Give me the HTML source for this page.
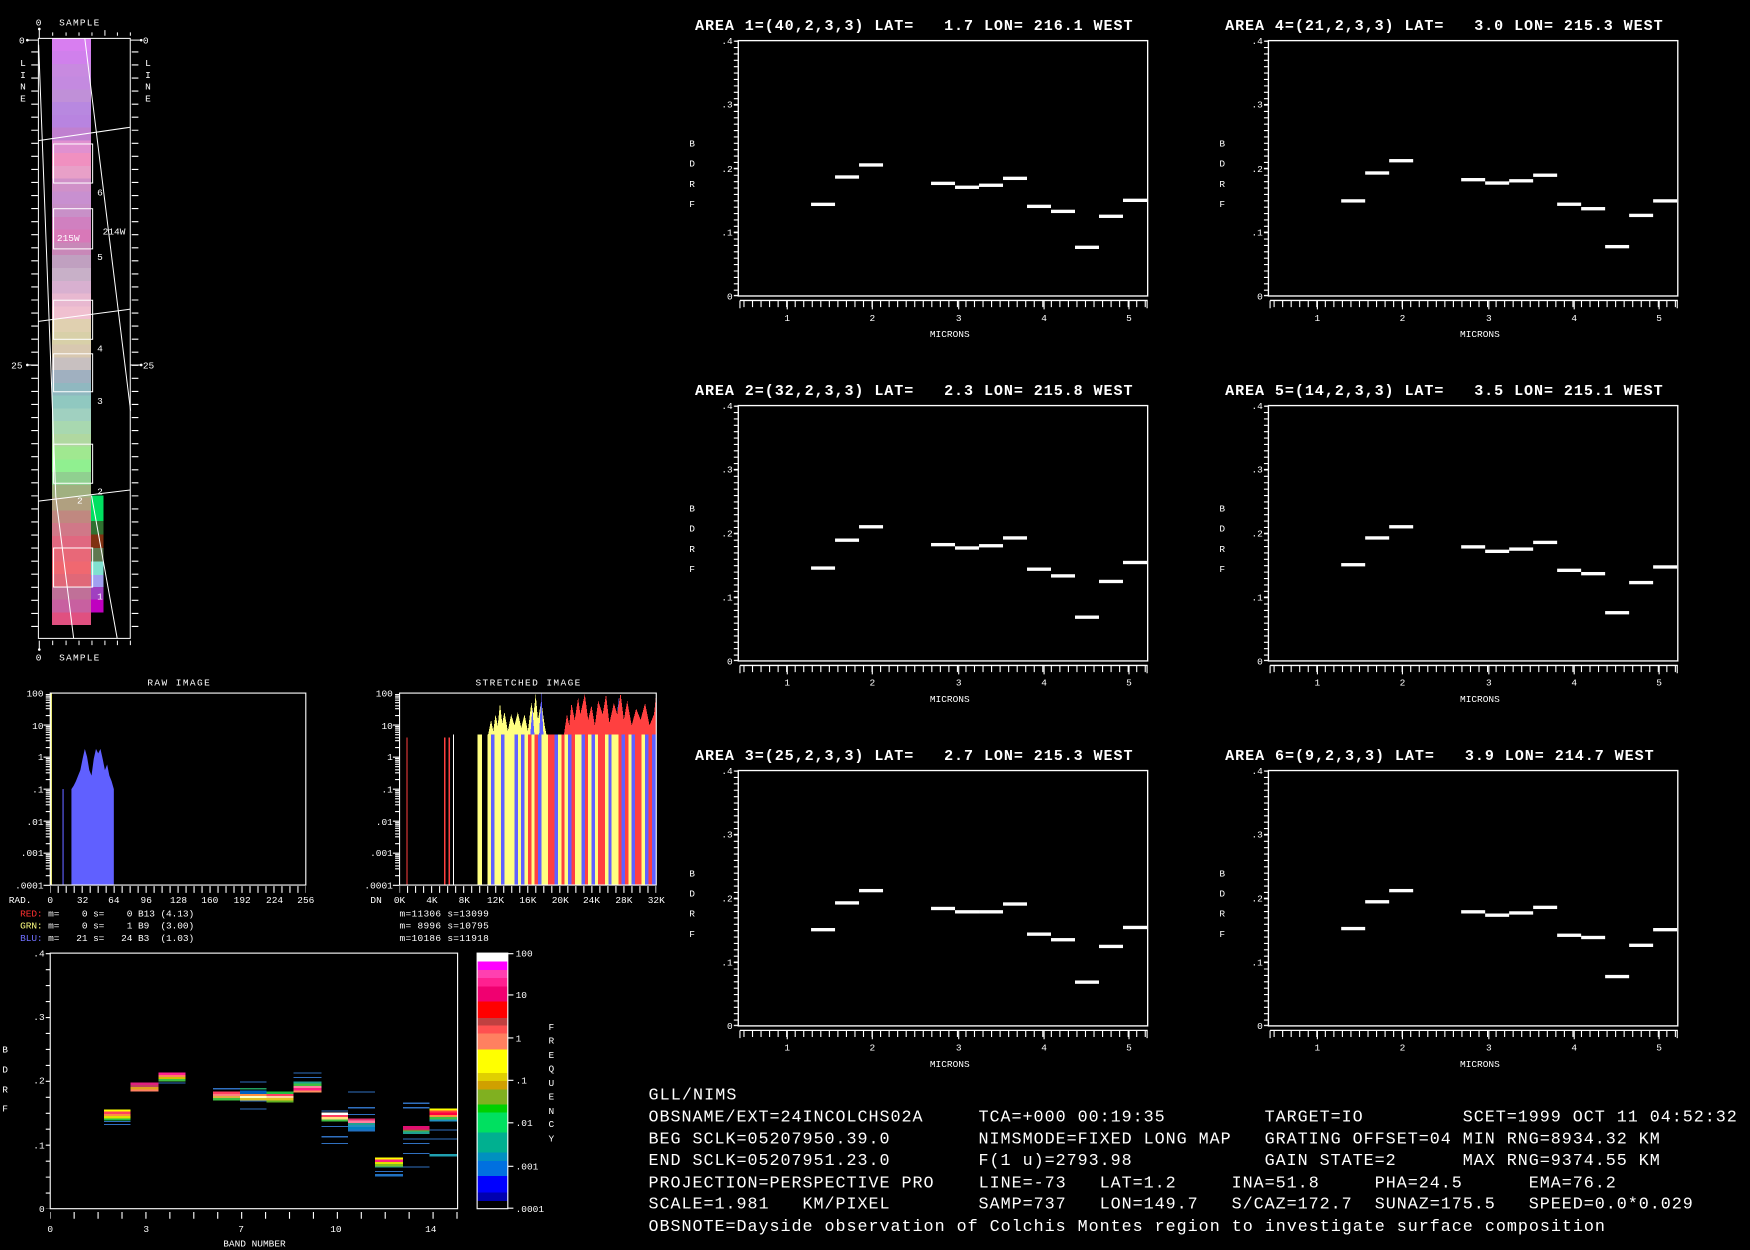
<!DOCTYPE html>
<html><head><meta charset="utf-8"><style>
html,body{margin:0;padding:0;background:#000;overflow:hidden}
svg{display:block}
text{font-family:"Liberation Mono",monospace;fill:#fff;white-space:pre}
.s{font-size:8.5px}
.t{font-size:13.5px;font-weight:bold}
.b{font-size:15px}
</style></head><body>
<svg width="1750" height="1250" viewBox="0 0 1568 1120" xmlns="http://www.w3.org/2000/svg">
<defs>
<path id="dec" d="M-4,1.3h4M-4,2.8h4M-4,4.4h4M-4,6.4h4M-4,8.6h4M-4,11.4h4M-4,14h4M-4,20.1h4M-6,28.7h6" stroke="#fff" stroke-width="1" fill="none"/>
<g id="pf" stroke="#fff" fill="none">
<rect x="0" y="0" width="366.8" height="228.8" stroke-width="1.2"/>
<line x1="-2" y1="0" x2="-2" y2="229" stroke-width="4" stroke-dasharray="1 4.72"/>
<line x1="-3" y1="0.5" x2="0" y2="0.5"/><line x1="-4" y1="57.2" x2="0" y2="57.2"/><line x1="-4" y1="114.4" x2="0" y2="114.4"/><line x1="-4" y1="171.6" x2="0" y2="171.6"/><line x1="-4" y1="228.3" x2="0" y2="228.3"/>
<line x1="1.5" y1="232.8" x2="366.8" y2="232.8" stroke-width="1.2"/>
<line x1="0" y1="235.8" x2="367" y2="235.8" stroke-width="6" stroke-dasharray="1 6.65" stroke-dashoffset="-4.6"/>
<path d="M1.5,232.8v7M43.9,232.8v8M120.1,232.8v8M197.5,232.8v8M274,232.8v8M350.1,232.8v8M366.3,232.8v7"/>
</g>
</defs>

<!-- ============ STRIP ============ -->
<g id="strip">
<g shape-rendering="crispEdges">
<rect x="46.4" y="34.4" width="35.2" height="11.5" fill="#d87ef0"/>
<rect x="46.4" y="45.8" width="35.2" height="11.5" fill="#d080ec"/>
<rect x="46.4" y="57.3" width="35.2" height="11.5" fill="#c88ae0"/>
<rect x="46.4" y="68.7" width="35.2" height="11.5" fill="#c48ae0"/>
<rect x="46.4" y="80.1" width="35.2" height="11.5" fill="#c090d8"/>
<rect x="46.4" y="91.6" width="35.2" height="11.5" fill="#b888e0"/>
<rect x="46.4" y="103" width="35.2" height="11.5" fill="#b884e0"/>
<rect x="46.4" y="114.4" width="35.2" height="11.5" fill="#c080d0"/>
<rect x="46.4" y="125.8" width="35.2" height="11.5" fill="#e090d0"/>
<rect x="46.4" y="137.3" width="35.2" height="11.5" fill="#f090c0"/>
<rect x="46.4" y="148.7" width="35.2" height="11.5" fill="#e8a0c8"/>
<rect x="46.4" y="160.1" width="35.2" height="11.5" fill="#d090c8"/>
<rect x="46.4" y="171.6" width="35.2" height="11.5" fill="#c890d0"/>
<rect x="46.4" y="183" width="35.2" height="11.5" fill="#c890c8"/>
<rect x="46.4" y="194.4" width="35.2" height="11.5" fill="#d080c0"/>
<rect x="46.4" y="205.8" width="35.2" height="11.5" fill="#d878b8"/>
<rect x="46.4" y="217.3" width="35.2" height="11.5" fill="#c888b8"/>
<rect x="46.4" y="228.7" width="35.2" height="11.5" fill="#c0a0c0"/>
<rect x="46.4" y="240.1" width="35.2" height="11.5" fill="#c8b0c8"/>
<rect x="46.4" y="251.6" width="35.2" height="11.5" fill="#d8b0d0"/>
<rect x="46.4" y="263" width="35.2" height="11.5" fill="#e8b8d0"/>
<rect x="46.4" y="274.4" width="35.2" height="11.5" fill="#f0c0d0"/>
<rect x="46.4" y="285.8" width="35.2" height="11.5" fill="#e0d0b0"/>
<rect x="46.4" y="297.3" width="35.2" height="11.5" fill="#d8d0a8"/>
<rect x="46.4" y="308.7" width="35.2" height="11.5" fill="#d8c8b0"/>
<rect x="46.4" y="320.1" width="35.2" height="11.5" fill="#c8c0c0"/>
<rect x="46.4" y="331.6" width="35.2" height="11.5" fill="#a0b0c0"/>
<rect x="46.4" y="343" width="35.2" height="11.5" fill="#90b8c0"/>
<rect x="46.4" y="354.4" width="35.2" height="11.5" fill="#90c8c0"/>
<rect x="46.4" y="365.8" width="35.2" height="11.5" fill="#a0d0c0"/>
<rect x="46.4" y="377.3" width="35.2" height="11.5" fill="#a8d8b0"/>
<rect x="46.4" y="388.7" width="35.2" height="11.5" fill="#b0d8a0"/>
<rect x="46.4" y="400.1" width="35.2" height="11.5" fill="#a0e890"/>
<rect x="46.4" y="411.6" width="35.2" height="11.5" fill="#90f090"/>
<rect x="46.4" y="423" width="35.2" height="11.5" fill="#90d090"/>
<rect x="46.4" y="434.4" width="35.2" height="11.5" fill="#a0b080"/>
<rect x="46.4" y="445.8" width="35.2" height="11.5" fill="#b0a080"/>
<rect x="46.4" y="457.3" width="35.2" height="11.5" fill="#c08880"/>
<rect x="46.4" y="468.7" width="35.2" height="11.5" fill="#d07888"/>
<rect x="46.4" y="480.1" width="35.2" height="11.5" fill="#e06880"/>
<rect x="46.4" y="491.6" width="35.2" height="11.5" fill="#e86878"/>
<rect x="46.4" y="503" width="35.2" height="11.5" fill="#f06870"/>
<rect x="46.4" y="514.4" width="35.2" height="11.5" fill="#e06878"/>
<rect x="46.4" y="525.8" width="35.2" height="11.5" fill="#c07098"/>
<rect x="46.4" y="537.3" width="35.2" height="11.5" fill="#c860a0"/>
<rect x="46.4" y="548.7" width="35.2" height="11.5" fill="#e05080"/>
<rect x="81.6" y="444" width="11.2" height="23" fill="#00e060"/>
<rect x="81.6" y="467" width="11.2" height="12" fill="#307030"/>
<rect x="81.6" y="479" width="11.2" height="12" fill="#803010"/>
<rect x="81.6" y="491" width="11.2" height="12" fill="#607850"/>
<rect x="81.6" y="503" width="11.2" height="12" fill="#80e0d0"/>
<rect x="81.6" y="515" width="11.2" height="11" fill="#a0a0f0"/>
<rect x="81.6" y="526" width="11.2" height="11" fill="#a040c0"/>
<rect x="81.6" y="537" width="11.2" height="12" fill="#c000c0"/>
</g>
<g stroke="#fff" fill="none" stroke-width="0.9">
<rect x="34.4" y="34.4" width="82.3" height="537.6"/>
<rect x="48" y="129" width="35" height="35"/>
<rect x="48" y="187" width="35" height="36"/>
<rect x="48" y="269" width="35" height="35"/>
<rect x="48" y="317" width="35" height="34"/>
<rect x="48" y="398" width="35" height="35"/>
<rect x="48" y="491" width="35" height="35"/>
<polyline points="34.6,40 50,445 66,572"/>
<polyline points="76,34.5 117,368"/>
<polyline points="82,444 105,572"/>
<line x1="34.4" y1="126" x2="116.7" y2="114"/>
<line x1="34.4" y1="288" x2="116.7" y2="277"/>
<line x1="34.4" y1="449" x2="116.7" y2="439"/>
<line x1="31" y1="46" x2="31" y2="572" stroke-width="6" stroke-dasharray="1 10.7"/>
<line x1="121" y1="46" x2="121" y2="572" stroke-width="6" stroke-dasharray="1 10.7"/>
<path d="M47.2,29v3M59.2,29v3M70.8,29v3M82.4,29v3M94,27v5M105.2,29v3M116.8,29v3M47.2,574v4M59.2,574v4M70.8,574v4M82.4,574v4M94,574v4M105.2,574v4M116.8,574v4M35.2,26v8M35.2,574v8M24,36h10M117,36h10M24,327h10M117,327h10"/>
</g>
<g fill="#fff"><circle cx="35.2" cy="26" r="1.2"/><circle cx="35.2" cy="582" r="1.2"/><circle cx="24.5" cy="36" r="1.2"/><circle cx="126.5" cy="36" r="1.2"/><circle cx="24.5" cy="327" r="1.2"/><circle cx="126.5" cy="327" r="1.2"/></g>
<text class="s" x="32" y="23">0</text><text class="s" x="53" y="23" textLength="36">SAMPLE</text>
<text class="s" x="32" y="592">0</text><text class="s" x="53" y="592" textLength="36">SAMPLE</text>
<text class="s" x="17" y="39">0</text><text class="s" x="128" y="39">0</text>
<text class="s" x="10" y="330">25</text><text class="s" x="128" y="330">25</text>
<text class="s" x="18" y="59">L</text><text class="s" x="18" y="70">I</text><text class="s" x="18" y="80">N</text><text class="s" x="18" y="91">E</text>
<text class="s" x="130" y="59">L</text><text class="s" x="130" y="70">I</text><text class="s" x="130" y="80">N</text><text class="s" x="130" y="91">E</text>
<text class="s" x="87" y="175">6</text><text class="s" x="87" y="233">5</text><text class="s" x="87" y="315">4</text><text class="s" x="87" y="362">3</text><text class="s" x="87" y="443">2</text><text class="s" x="69" y="451">2</text><text class="s" x="87" y="537">1</text>
<text class="s" x="51" y="216">215W</text><text class="s" x="92" y="210">214W</text>
</g>

<!-- ============ RAW HISTOGRAM ============ -->
<text class="s" x="132" y="614" textLength="56">RAW IMAGE</text>
<polygon fill="#6060ff" points="64,793 64,707 66,704 68,700 70,695 72,690 74,680 76,671 78,678 80,690 82,695 84,680 86,671 88,675 90,671 92,680 94,690 96,685 98,695 100,700 102,707 102,793"/>
<rect x="56" y="707" width="1" height="86" fill="#6060ff"/>
<rect x="45" y="621" width="1.5" height="172" fill="#ffff80"/>
<rect x="45" y="621" width="229" height="172" fill="none" stroke="#fff" stroke-width="1"/>
<use href="#dec" x="45" y="621"/><use href="#dec" x="45" y="649.7"/><use href="#dec" x="45" y="678.4"/><use href="#dec" x="45" y="707.1"/><use href="#dec" x="45" y="735.8"/><use href="#dec" x="45" y="764.5"/>
<line x1="45" y1="797" x2="274" y2="797" stroke="#fff" stroke-width="6" stroke-dasharray="1 6.16" stroke-dashoffset="0.5"/>
<g class="s" text-anchor="end"><text x="39" y="624">100</text><text x="39" y="653">10</text><text x="39" y="681">1</text><text x="39" y="710">.1</text><text x="39" y="739">.01</text><text x="39" y="767">.001</text><text x="39" y="796">.0001</text></g>
<g class="s" text-anchor="middle"><text x="18" y="809">RAD.</text><text x="45" y="809">0</text><text x="74" y="809">32</text><text x="102" y="809">64</text><text x="131" y="809">96</text><text x="160" y="809">128</text><text x="188" y="809">160</text><text x="217" y="809">192</text><text x="246" y="809">224</text><text x="274" y="809">256</text></g>
<text class="s" x="18" y="821" textLength="156"><tspan fill="#ff3030">RED:</tspan> m=    0 s=    0 B13 (4.13)</text>
<text class="s" x="18" y="832" textLength="156"><tspan fill="#ffff80">GRN:</tspan> m=    0 s=    1 B9  (3.00)</text>
<text class="s" x="18" y="843" textLength="156"><tspan fill="#7070ff">BLU:</tspan> m=   21 s=   24 B3  (1.03)</text>

<!-- ============ STRETCHED ============ -->
<text class="s" x="426" y="614" textLength="94">STRETCHED IMAGE</text>
<g shape-rendering="crispEdges">
<rect x="364" y="661" width="1" height="132" fill="#ff4040"/>
<rect x="398" y="661" width="1" height="132" fill="#ff4040"/>
<rect x="402" y="661" width="1" height="132" fill="#ff4040"/>
<rect x="406" y="658" width="1" height="135" fill="#ffffff"/>
<rect x="428" y="658" width="4" height="135" fill="#ffff80"/>
<polygon fill="#ffff80" points="437,660 440,645 442,655 444,640 446,650 448,630 450,648 452,638 455,655 458,640 461,650 464,638 467,652 470,640 473,655 476,630 478,640 480,622 482,645 485,628 488,650 490,660"/>
<polygon fill="#6060ff" points="475,660 477,635 479,660 483,660 485,621 487,660 540,660 542,630 544,660 552,660 554,625 556,660"/>
<polygon fill="#ff4040" points="505,660 508,640 510,650 512,630 515,645 518,625 520,640 524,622 527,645 530,632 533,650 536,628 540,640 543,622 546,648 550,630 553,640 556,621 559,645 562,628 566,650 570,635 574,645 578,630 582,650 586,640 588,621 588,660"/>
<rect x="437" y="658" width="3" height="135" fill="#ffff80"/><rect x="440" y="658" width="3" height="135" fill="#6060ff"/><rect x="443" y="658" width="3" height="135" fill="#ffff80"/><rect x="446" y="658" width="3" height="135" fill="#ffff80"/><rect x="449" y="658" width="3" height="135" fill="#6060ff"/><rect x="452" y="658" width="3" height="135" fill="#ffff80"/><rect x="455" y="658" width="3" height="135" fill="#ffff80"/><rect x="458" y="658" width="3" height="135" fill="#ffff80"/><rect x="461" y="658" width="3" height="135" fill="#6060ff"/><rect x="464" y="658" width="3" height="135" fill="#ffff80"/>
<rect x="467" y="658" width="3" height="135" fill="#6060ff"/><rect x="470" y="658" width="3" height="135" fill="#ffff80"/><rect x="473" y="658" width="3" height="135" fill="#ff4040"/><rect x="476" y="658" width="3" height="135" fill="#ffff80"/><rect x="479" y="658" width="3" height="135" fill="#ff4040"/><rect x="482" y="658" width="3" height="135" fill="#6060ff"/><rect x="485" y="658" width="3" height="135" fill="#ffff80"/><rect x="488" y="658" width="3" height="135" fill="#ffff80"/><rect x="491" y="658" width="3" height="135" fill="#ff4040"/><rect x="494" y="658" width="3" height="135" fill="#ff4040"/>
<rect x="497" y="658" width="3" height="135" fill="#6060ff"/><rect x="500" y="658" width="3" height="135" fill="#ffff80"/><rect x="503" y="658" width="3" height="135" fill="#ff4040"/><rect x="506" y="658" width="3" height="135" fill="#ffff80"/><rect x="509" y="658" width="3" height="135" fill="#6060ff"/><rect x="512" y="658" width="3" height="135" fill="#ff4040"/><rect x="515" y="658" width="3" height="135" fill="#ffff80"/><rect x="518" y="658" width="3" height="135" fill="#ffff80"/><rect x="521" y="658" width="3" height="135" fill="#6060ff"/><rect x="524" y="658" width="3" height="135" fill="#ff4040"/>
<rect x="527" y="658" width="3" height="135" fill="#ffff80"/><rect x="530" y="658" width="3" height="135" fill="#6060ff"/><rect x="533" y="658" width="3" height="135" fill="#ffff80"/><rect x="536" y="658" width="3" height="135" fill="#ff4040"/><rect x="539" y="658" width="3" height="135" fill="#ff4040"/><rect x="542" y="658" width="3" height="135" fill="#ffff80"/><rect x="545" y="658" width="3" height="135" fill="#6060ff"/><rect x="548" y="658" width="3" height="135" fill="#ffff80"/><rect x="551" y="658" width="3" height="135" fill="#ffff80"/><rect x="554" y="658" width="3" height="135" fill="#ff4040"/>
<rect x="557" y="658" width="3" height="135" fill="#6060ff"/><rect x="560" y="658" width="3" height="135" fill="#ff4040"/><rect x="563" y="658" width="3" height="135" fill="#ffff80"/><rect x="566" y="658" width="3" height="135" fill="#6060ff"/><rect x="569" y="658" width="3" height="135" fill="#ff4040"/><rect x="572" y="658" width="3" height="135" fill="#ff4040"/><rect x="575" y="658" width="3" height="135" fill="#ffff80"/><rect x="578" y="658" width="3" height="135" fill="#6060ff"/><rect x="581" y="658" width="3" height="135" fill="#ff4040"/><rect x="584" y="658" width="4" height="135" fill="#6060ff"/>
</g>
<rect x="358" y="621" width="230" height="172" fill="none" stroke="#fff" stroke-width="1"/>
<use href="#dec" x="358" y="621"/><use href="#dec" x="358" y="649.7"/><use href="#dec" x="358" y="678.4"/><use href="#dec" x="358" y="707.1"/><use href="#dec" x="358" y="735.8"/><use href="#dec" x="358" y="764.5"/>
<line x1="358" y1="797" x2="588" y2="797" stroke="#fff" stroke-width="6" stroke-dasharray="1 6.18" stroke-dashoffset="0.5"/>
<g class="s" text-anchor="end"><text x="352" y="624">100</text><text x="352" y="653">10</text><text x="352" y="681">1</text><text x="352" y="710">.1</text><text x="352" y="739">.01</text><text x="352" y="767">.001</text><text x="352" y="796">.0001</text></g>
<g class="s" text-anchor="middle"><text x="337" y="809">DN</text><text x="358" y="809">0K</text><text x="387" y="809">4K</text><text x="416" y="809">8K</text><text x="444" y="809">12K</text><text x="473" y="809">16K</text><text x="502" y="809">20K</text><text x="530" y="809">24K</text><text x="559" y="809">28K</text><text x="588" y="809">32K</text></g>
<text class="s" x="358" y="821" textLength="80">m=11306 s=13099</text>
<text class="s" x="358" y="832" textLength="80">m= 8996 s=10795</text>
<text class="s" x="358" y="843" textLength="80">m=10186 s=11918</text>

<!-- ============ BDRF BAND PLOT ============ -->
<g shape-rendering="crispEdges">
<rect x="93" y="994" width="24" height="2" fill="#ffff00"/><rect x="93" y="996" width="24" height="2" fill="#ff4060"/><rect x="93" y="998" width="24" height="2" fill="#ff9040"/><rect x="93" y="1000" width="24" height="2" fill="#e0e000"/><rect x="93" y="1002" width="24" height="2" fill="#20c040"/><rect x="93" y="1004.5" width="24" height="1" fill="#3070c0"/><rect x="93" y="1007" width="24" height="1" fill="#3070c0"/>
<rect x="117" y="970" width="25" height="2" fill="#e02080"/><rect x="117" y="972" width="25" height="2" fill="#c04060"/><rect x="117" y="974" width="25" height="2" fill="#e0a020"/><rect x="117" y="976" width="25" height="2" fill="#ff8060"/>
<rect x="142" y="961" width="24" height="2" fill="#ff2090"/><rect x="142" y="963" width="24" height="2" fill="#ff8060"/><rect x="142" y="965" width="24" height="2" fill="#d0c000"/><rect x="142" y="967" width="24" height="2" fill="#40c040"/><rect x="142" y="970" width="24" height="1" fill="#3070c0"/>
<rect x="191" y="975" width="24" height="1" fill="#3070c0"/><rect x="191" y="978" width="24" height="2" fill="#ff4060"/><rect x="191" y="980" width="24" height="2" fill="#ff8080"/><rect x="191" y="982" width="24" height="2" fill="#e0b040"/><rect x="191" y="984" width="24" height="2" fill="#40c040"/>
<rect x="215" y="969" width="24" height="1" fill="#3070c0"/><rect x="215" y="975" width="24" height="1" fill="#20a060"/><rect x="215" y="977" width="24" height="3" fill="#0060c0"/><rect x="215" y="980" width="24" height="2" fill="#ff9040"/><rect x="215" y="982" width="24" height="2" fill="#ffffc0"/><rect x="215" y="984" width="24" height="2" fill="#e0c020"/><rect x="215" y="986" width="24" height="1" fill="#3070c0"/><rect x="215" y="993" width="24" height="1" fill="#3070c0"/>
<rect x="239" y="978" width="24" height="2" fill="#20c040"/><rect x="239" y="980" width="24" height="2" fill="#ff4060"/><rect x="239" y="982" width="24" height="2" fill="#ffd0a0"/><rect x="239" y="984" width="24" height="2" fill="#e0c020"/><rect x="239" y="986" width="24" height="2" fill="#60b020"/>
<rect x="263" y="961" width="25" height="1" fill="#3070c0"/><rect x="263" y="965" width="25" height="1" fill="#3070c0"/><rect x="263" y="969" width="25" height="2" fill="#20a090"/><rect x="263" y="971" width="25" height="2" fill="#40c040"/><rect x="263" y="973" width="25" height="2" fill="#ff80a0"/><rect x="263" y="975" width="25" height="2" fill="#ff2080"/><rect x="263" y="977" width="25" height="2" fill="#ff9060"/>
<rect x="288" y="995" width="24" height="1" fill="#3070c0"/><rect x="288" y="997" width="24" height="2" fill="#ffffff"/><rect x="288" y="999" width="24" height="2" fill="#ff4060"/><rect x="288" y="1001" width="24" height="2" fill="#ffe080"/><rect x="288" y="1003" width="24" height="2" fill="#40c040"/><rect x="288" y="1009" width="24" height="1" fill="#3070c0"/><rect x="288" y="1018" width="24" height="1" fill="#3070c0"/><rect x="288" y="1024" width="24" height="1" fill="#3070c0"/>
<rect x="312" y="978" width="24" height="1" fill="#3070c0"/><rect x="312" y="992" width="24" height="1" fill="#3070c0"/><rect x="312" y="998" width="24" height="1" fill="#3070c0"/><rect x="312" y="1002" width="24" height="2" fill="#e03070"/><rect x="312" y="1004" width="24" height="2" fill="#ff80a0"/><rect x="312" y="1006" width="24" height="2" fill="#20a090"/><rect x="312" y="1008" width="24" height="2" fill="#2090c0"/><rect x="312" y="1010" width="24" height="2" fill="#0080c0"/><rect x="312" y="1012" width="24" height="2" fill="#2070c0"/>
<rect x="336" y="1037" width="25" height="2" fill="#ffff00"/><rect x="336" y="1039" width="25" height="2" fill="#ff2080"/><rect x="336" y="1041" width="25" height="2" fill="#e0e000"/><rect x="336" y="1043" width="25" height="2" fill="#80c020"/><rect x="336" y="1045" width="25" height="1" fill="#20a090"/><rect x="336" y="1049" width="25" height="1" fill="#3070c0"/><rect x="336" y="1052" width="25" height="2" fill="#2070c0"/>
<rect x="361" y="988" width="24" height="1" fill="#3070c0"/><rect x="361" y="992" width="24" height="1" fill="#3070c0"/><rect x="361" y="1009" width="24" height="3" fill="#e01070"/><rect x="361" y="1012" width="24" height="1" fill="#c04040"/><rect x="361" y="1013" width="24" height="1" fill="#40c040"/><rect x="361" y="1014" width="24" height="2" fill="#20a090"/><rect x="361" y="1020" width="24" height="1" fill="#3070c0"/><rect x="361" y="1024" width="24" height="1" fill="#3070c0"/><rect x="361" y="1033" width="24" height="1" fill="#3070c0"/><rect x="361" y="1045" width="24" height="1" fill="#3070c0"/>
<rect x="385" y="993" width="25" height="2" fill="#ffff00"/><rect x="385" y="995" width="25" height="2" fill="#ff4040"/><rect x="385" y="997" width="25" height="2" fill="#ff0040"/><rect x="385" y="999" width="25" height="2" fill="#ff9040"/><rect x="385" y="1001" width="25" height="2" fill="#40c040"/><rect x="385" y="1003" width="25" height="2" fill="#2090c0"/><rect x="385" y="1012" width="25" height="1" fill="#3070c0"/><rect x="385" y="1020" width="25" height="1" fill="#3070c0"/><rect x="385" y="1034" width="25" height="2" fill="#20a0b0"/>
</g>
<rect x="45" y="854" width="365" height="229" fill="none" stroke="#fff" stroke-width="1"/>
<line x1="43" y1="854" x2="43" y2="1083" stroke="#fff" stroke-width="4" stroke-dasharray="1 13.3"/>
<line x1="45" y1="1089" x2="411" y2="1089" stroke="#fff" stroke-width="6" stroke-dasharray="1 20.44" stroke-dashoffset="0.5"/>
<g class="s" text-anchor="end"><text x="40" y="857">.4</text><text x="40" y="914">.3</text><text x="40" y="971">.2</text><text x="40" y="1029">.1</text><text x="40" y="1086">0</text></g>
<g class="s"><text x="2" y="943">B</text><text x="2" y="961">D</text><text x="2" y="979">R</text><text x="2" y="996">F</text></g>
<g class="s" text-anchor="middle"><text x="45" y="1104">0</text><text x="131" y="1104">3</text><text x="216" y="1104">7</text><text x="301" y="1104">10</text><text x="386" y="1104">14</text><text x="228" y="1117">BAND NUMBER</text></g>
<g shape-rendering="crispEdges">
<rect x="427.5" y="854" width="27.5" height="7.5" fill="#ffffff"/>
<rect x="427.5" y="861.5" width="27.5" height="7.5" fill="#ff00ff"/>
<rect x="427.5" y="869" width="27.5" height="7.4" fill="#ff40b0"/>
<rect x="427.5" y="876.4" width="27.5" height="7.4" fill="#ff2090"/>
<rect x="427.5" y="883.8" width="27.5" height="13.4" fill="#f00070"/>
<rect x="427.5" y="897.2" width="27.5" height="14.9" fill="#ff0000"/>
<rect x="427.5" y="912.1" width="27.5" height="6.9" fill="#c04040"/>
<rect x="427.5" y="919" width="27.5" height="7.1" fill="#ff5050"/>
<rect x="427.5" y="926.1" width="27.5" height="14.3" fill="#ff8060"/>
<rect x="427.5" y="940.4" width="27.5" height="20.9" fill="#ffff00"/>
<rect x="427.5" y="961.3" width="27.5" height="7.4" fill="#e0d000"/>
<rect x="427.5" y="968.7" width="27.5" height="7.5" fill="#d0a000"/>
<rect x="427.5" y="976.2" width="27.5" height="13.4" fill="#80b020"/>
<rect x="427.5" y="989.6" width="27.5" height="7.4" fill="#00d000"/>
<rect x="427.5" y="997" width="27.5" height="17.9" fill="#00e060"/>
<rect x="427.5" y="1014.9" width="27.5" height="17.9" fill="#00b090"/>
<rect x="427.5" y="1032.8" width="27.5" height="7.5" fill="#0090c0"/>
<rect x="427.5" y="1040.3" width="27.5" height="13.4" fill="#0070e0"/>
<rect x="427.5" y="1053.7" width="27.5" height="14.9" fill="#0000ff"/>
<rect x="427.5" y="1068.6" width="27.5" height="7.4" fill="#0000b0"/>
</g>
<rect x="427.5" y="854" width="27.5" height="229" fill="none" stroke="#fff" stroke-width="1"/>
<path d="M455,854.5h5M455,891.5h5M455,930h5M455,968h5M455,1006h5M455,1045h5M455,1082.5h5" stroke="#fff"/>
<g class="s"><text x="462" y="857">100</text><text x="462" y="894">10</text><text x="462" y="933">1</text><text x="462" y="971">.1</text><text x="462" y="1009">.01</text><text x="462" y="1048">.001</text><text x="462" y="1086">.0001</text></g>
<g class="s" text-anchor="middle"><text x="494" y="923">F</text><text x="494" y="935">R</text><text x="494" y="948">E</text><text x="494" y="960">Q</text><text x="494" y="973">U</text><text x="494" y="985">E</text><text x="494" y="998">N</text><text x="494" y="1010">C</text><text x="494" y="1023">Y</text></g>

<!-- ============ AREA PLOTS ============ -->
<g transform="translate(661.5,36.4)">
<use href="#pf"/>
<text class="t" x="-38.8" y="-9.5" textLength="392">AREA 1=(40,2,3,3) LAT=   1.7 LON= 216.1 WEST</text>
<g class="s" text-anchor="end"><text x="-5" y="3">.4</text><text x="-5" y="60">.3</text><text x="-5" y="117.5">.2</text><text x="-5" y="174.6">.1</text><text x="-5" y="231.8">0</text></g>
<g class="s"><text x="-44" y="95">B</text><text x="-44" y="113">D</text><text x="-44" y="131">R</text><text x="-44" y="149">F</text></g>
<g class="s" text-anchor="middle"><text x="43.9" y="251">1</text><text x="120.1" y="251">2</text><text x="197.5" y="251">3</text><text x="274" y="251">4</text><text x="350.1" y="251">5</text><text x="189.5" y="265.5">MICRONS</text></g>
<g fill="#fff"><rect x="65.2" y="145.2" width="21.5" height="3"/><rect x="86.7" y="120.7" width="21.5" height="3"/><rect x="108.2" y="109.9" width="21.5" height="3"/><rect x="172.7" y="126.4" width="21.5" height="3"/><rect x="194.2" y="129.9" width="21.5" height="3"/><rect x="215.7" y="128.1" width="21.5" height="3"/><rect x="237.2" y="121.9" width="21.5" height="3"/><rect x="258.7" y="147" width="21.5" height="3"/><rect x="280.2" y="151.5" width="21.5" height="3"/><rect x="301.7" y="183.7" width="21.5" height="3"/><rect x="323.2" y="155.9" width="21.5" height="3"/><rect x="344.7" y="141.6" width="21.5" height="3"/></g>
</g>

<g transform="translate(1136.5,36.4)">
<use href="#pf"/>
<text class="t" x="-38.8" y="-9.5" textLength="392">AREA 4=(21,2,3,3) LAT=   3.0 LON= 215.3 WEST</text>
<g class="s" text-anchor="end"><text x="-5" y="3">.4</text><text x="-5" y="60">.3</text><text x="-5" y="117.5">.2</text><text x="-5" y="174.6">.1</text><text x="-5" y="231.8">0</text></g>
<g class="s"><text x="-44" y="95">B</text><text x="-44" y="113">D</text><text x="-44" y="131">R</text><text x="-44" y="149">F</text></g>
<g class="s" text-anchor="middle"><text x="43.9" y="251">1</text><text x="120.1" y="251">2</text><text x="197.5" y="251">3</text><text x="274" y="251">4</text><text x="350.1" y="251">5</text><text x="189.5" y="265.5">MICRONS</text></g>
<g fill="#fff"><rect x="65.2" y="142.1" width="21.5" height="3"/><rect x="86.7" y="117.1" width="21.5" height="3"/><rect x="108.2" y="106.1" width="21.5" height="3"/><rect x="172.7" y="123.1" width="21.5" height="3"/><rect x="194.2" y="126.1" width="21.5" height="3"/><rect x="215.7" y="124.1" width="21.5" height="3"/><rect x="237.2" y="119.1" width="21.5" height="3"/><rect x="258.7" y="145.1" width="21.5" height="3"/><rect x="280.2" y="149.1" width="21.5" height="3"/><rect x="301.7" y="183.1" width="21.5" height="3"/><rect x="323.2" y="155.1" width="21.5" height="3"/><rect x="344.7" y="142.1" width="21.5" height="3"/></g>
</g>

<g transform="translate(661.5,363.4)">
<use href="#pf"/>
<text class="t" x="-38.8" y="-9.5" textLength="392">AREA 2=(32,2,3,3) LAT=   2.3 LON= 215.8 WEST</text>
<g class="s" text-anchor="end"><text x="-5" y="3">.4</text><text x="-5" y="60">.3</text><text x="-5" y="117.5">.2</text><text x="-5" y="174.6">.1</text><text x="-5" y="231.8">0</text></g>
<g class="s"><text x="-44" y="95">B</text><text x="-44" y="113">D</text><text x="-44" y="131">R</text><text x="-44" y="149">F</text></g>
<g class="s" text-anchor="middle"><text x="43.9" y="251">1</text><text x="120.1" y="251">2</text><text x="197.5" y="251">3</text><text x="274" y="251">4</text><text x="350.1" y="251">5</text><text x="189.5" y="265.5">MICRONS</text></g>
<g fill="#fff"><rect x="65.2" y="144.1" width="21.5" height="3"/><rect x="86.7" y="119.1" width="21.5" height="3"/><rect x="108.2" y="107.1" width="21.5" height="3"/><rect x="172.7" y="123.1" width="21.5" height="3"/><rect x="194.2" y="126.1" width="21.5" height="3"/><rect x="215.7" y="124.1" width="21.5" height="3"/><rect x="237.2" y="117.1" width="21.5" height="3"/><rect x="258.7" y="145.1" width="21.5" height="3"/><rect x="280.2" y="151.1" width="21.5" height="3"/><rect x="301.7" y="188.1" width="21.5" height="3"/><rect x="323.2" y="156.1" width="21.5" height="3"/><rect x="344.7" y="139.1" width="21.5" height="3"/></g>
</g>

<g transform="translate(1136.5,363.4)">
<use href="#pf"/>
<text class="t" x="-38.8" y="-9.5" textLength="392">AREA 5=(14,2,3,3) LAT=   3.5 LON= 215.1 WEST</text>
<g class="s" text-anchor="end"><text x="-5" y="3">.4</text><text x="-5" y="60">.3</text><text x="-5" y="117.5">.2</text><text x="-5" y="174.6">.1</text><text x="-5" y="231.8">0</text></g>
<g class="s"><text x="-44" y="95">B</text><text x="-44" y="113">D</text><text x="-44" y="131">R</text><text x="-44" y="149">F</text></g>
<g class="s" text-anchor="middle"><text x="43.9" y="251">1</text><text x="120.1" y="251">2</text><text x="197.5" y="251">3</text><text x="274" y="251">4</text><text x="350.1" y="251">5</text><text x="189.5" y="265.5">MICRONS</text></g>
<g fill="#fff"><rect x="65.2" y="141.1" width="21.5" height="3"/><rect x="86.7" y="117.1" width="21.5" height="3"/><rect x="108.2" y="107.1" width="21.5" height="3"/><rect x="172.7" y="125.1" width="21.5" height="3"/><rect x="194.2" y="129.1" width="21.5" height="3"/><rect x="215.7" y="127.1" width="21.5" height="3"/><rect x="237.2" y="121.1" width="21.5" height="3"/><rect x="258.7" y="146.1" width="21.5" height="3"/><rect x="280.2" y="149.1" width="21.5" height="3"/><rect x="301.7" y="184.1" width="21.5" height="3"/><rect x="323.2" y="157.1" width="21.5" height="3"/><rect x="344.7" y="143.1" width="21.5" height="3"/></g>
</g>

<g transform="translate(661.5,690.4)">
<use href="#pf"/>
<text class="t" x="-38.8" y="-9.5" textLength="392">AREA 3=(25,2,3,3) LAT=   2.7 LON= 215.3 WEST</text>
<g class="s" text-anchor="end"><text x="-5" y="3">.4</text><text x="-5" y="60">.3</text><text x="-5" y="117.5">.2</text><text x="-5" y="174.6">.1</text><text x="-5" y="231.8">0</text></g>
<g class="s"><text x="-44" y="95">B</text><text x="-44" y="113">D</text><text x="-44" y="131">R</text><text x="-44" y="149">F</text></g>
<g class="s" text-anchor="middle"><text x="43.9" y="251">1</text><text x="120.1" y="251">2</text><text x="197.5" y="251">3</text><text x="274" y="251">4</text><text x="350.1" y="251">5</text><text x="189.5" y="265.5">MICRONS</text></g>
<g fill="#fff"><rect x="65.2" y="141.1" width="21.5" height="3"/><rect x="86.7" y="117.1" width="21.5" height="3"/><rect x="108.2" y="106.1" width="21.5" height="3"/><rect x="172.7" y="122.1" width="21.5" height="3"/><rect x="194.2" y="125.1" width="21.5" height="3"/><rect x="215.7" y="125.1" width="21.5" height="3"/><rect x="237.2" y="118.1" width="21.5" height="3"/><rect x="258.7" y="145.1" width="21.5" height="3"/><rect x="280.2" y="150.1" width="21.5" height="3"/><rect x="301.7" y="188.1" width="21.5" height="3"/><rect x="323.2" y="156.1" width="21.5" height="3"/><rect x="344.7" y="139.1" width="21.5" height="3"/></g>
</g>

<g transform="translate(1136.5,690.4)">
<use href="#pf"/>
<text class="t" x="-38.8" y="-9.5" textLength="384">AREA 6=(9,2,3,3) LAT=   3.9 LON= 214.7 WEST</text>
<g class="s" text-anchor="end"><text x="-5" y="3">.4</text><text x="-5" y="60">.3</text><text x="-5" y="117.5">.2</text><text x="-5" y="174.6">.1</text><text x="-5" y="231.8">0</text></g>
<g class="s"><text x="-44" y="95">B</text><text x="-44" y="113">D</text><text x="-44" y="131">R</text><text x="-44" y="149">F</text></g>
<g class="s" text-anchor="middle"><text x="43.9" y="251">1</text><text x="120.1" y="251">2</text><text x="197.5" y="251">3</text><text x="274" y="251">4</text><text x="350.1" y="251">5</text><text x="189.5" y="265.5">MICRONS</text></g>
<g fill="#fff"><rect x="65.2" y="140.1" width="21.5" height="3"/><rect x="86.7" y="116.1" width="21.5" height="3"/><rect x="108.2" y="106.1" width="21.5" height="3"/><rect x="172.7" y="125.1" width="21.5" height="3"/><rect x="194.2" y="128.1" width="21.5" height="3"/><rect x="215.7" y="126.1" width="21.5" height="3"/><rect x="237.2" y="121.1" width="21.5" height="3"/><rect x="258.7" y="146.1" width="21.5" height="3"/><rect x="280.2" y="148.1" width="21.5" height="3"/><rect x="301.7" y="183.1" width="21.5" height="3"/><rect x="323.2" y="155.1" width="21.5" height="3"/><rect x="344.7" y="141.1" width="21.5" height="3"/></g>
</g>

<!-- ============ INFO TEXT ============ -->
<g class="b">
<text x="581" y="985" textLength="78.8">GLL/NIMS</text>
<text x="581" y="1005" textLength="975.2">OBSNAME/EXT=24INCOLCHS02A     TCA=+000 00:19:35         TARGET=IO         SCET=1999 OCT 11 04:52:32</text>
<text x="581" y="1024.5" textLength="906.2">BEG SCLK=05207950.39.0        NIMSMODE=FIXED LONG MAP   GRATING OFFSET=04 MIN RNG=8934.32 KM</text>
<text x="581" y="1044" textLength="906.2">END SCLK=05207951.23.0        F(1 u)=2793.98            GAIN STATE=2      MAX RNG=9374.55 KM</text>
<text x="581" y="1064" textLength="866.8">PROJECTION=PERSPECTIVE PRO    LINE=-73   LAT=1.2     INA=51.8     PHA=24.5      EMA=76.2</text>
<text x="581" y="1083" textLength="935.8">SCALE=1.981   KM/PIXEL        SAMP=737   LON=149.7   S/CAZ=172.7  SUNAZ=175.5   SPEED=0.0*0.029</text>
<text x="581" y="1103" textLength="857">OBSNOTE=Dayside observation of Colchis Montes region to investigate surface composition</text>
</g>
</svg>
</body></html>
